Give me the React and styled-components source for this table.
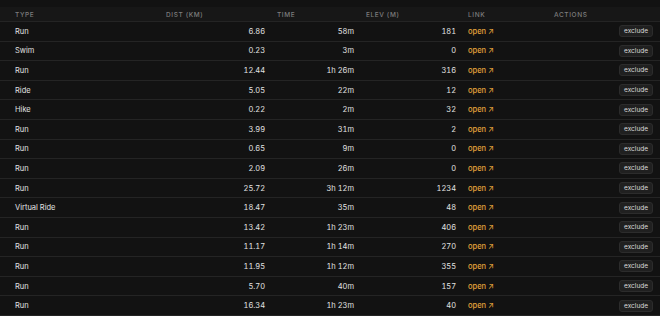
import React from "react";
import styled, { createGlobalStyle } from "styled-components";

const Global = createGlobalStyle`
  html, body { margin: 0; padding: 0; background: #121212; }
  body { font-family: Inter, "Noto Sans", sans-serif; -webkit-font-smoothing: antialiased; }
`;

const Wrap = styled.div`
  width: 660px;
  height: 316px;
  overflow: hidden;
  background: #121212;
  padding-top: 7px;
  box-sizing: border-box;
`;

const COLS = "160px 111px 89px 102px 86px 1fr";

const HeadRow = styled.div`
  display: grid;
  grid-template-columns: ${COLS};
  height: 15px;
  padding-top: 1px;
  box-sizing: border-box;
  border-bottom: 1px solid #242424;
  background: #171717;
  align-items: center;
`;

const Th = styled.div`
  padding: 0 6px;
  font-size: 6.5px;
  letter-spacing: 0.6px;
  text-transform: uppercase;
  color: #7d7d7d;
  font-weight: 500;
  &:first-child { padding-left: 15px; }
`;

const Row = styled.div`
  display: grid;
  grid-template-columns: ${COLS};
  height: 19.6px;
  box-sizing: border-box;
  border-bottom: 1px solid #242424;
  align-items: center;
`;

const Td = styled.div`
  padding: 0 6px;
  font-size: 7.5px;
  color: ${(p) => (p.$link ? "#e3a23b" : "#e2e2e2")};
  text-align: ${(p) => (p.$num || p.$end ? "right" : "left")};
  font-variant-numeric: tabular-nums;
  font-weight: ${(p) => (p.$link ? 500 : 400)};
  &:first-child { padding-left: 15px; }
  &:last-child { padding-right: 7px; }
`;

const Btn = styled.button`
  font-family: inherit;
  font-size: 6.5px;
  color: #dcdcdc;
  background: #202020;
  border: 1px solid #2c2c2c;
  border-radius: 3px;
  height: 12px;
  padding: 0 4px;
  line-height: 10px;
  cursor: pointer;
`;

const rows = [
  ["Run", "6.86", "58m", "181"],
  ["Swim", "0.23", "3m", "0"],
  ["Run", "12.44", "1h 26m", "316"],
  ["Ride", "5.05", "22m", "12"],
  ["Hike", "0.22", "2m", "32"],
  ["Run", "3.99", "31m", "2"],
  ["Run", "0.65", "9m", "0"],
  ["Run", "2.09", "26m", "0"],
  ["Run", "25.72", "3h 12m", "1234"],
  ["Virtual Ride", "18.47", "35m", "48"],
  ["Run", "13.42", "1h 23m", "406"],
  ["Run", "11.17", "1h 14m", "270"],
  ["Run", "11.95", "1h 12m", "355"],
  ["Run", "5.70", "40m", "157"],
  ["Run", "16.34", "1h 23m", "40"],
];

export default function App() {
  return (
    <>
      <Global />
      <Wrap>
        <HeadRow>
          <Th>Type</Th>
          <Th>Dist (km)</Th>
          <Th>Time</Th>
          <Th>Elev (m)</Th>
          <Th>Link</Th>
          <Th>Actions</Th>
        </HeadRow>
        {rows.map((r, i) => (
          <Row key={i}>
            <Td>{r[0]}</Td>
            <Td $num>{r[1]}</Td>
            <Td $num>{r[2]}</Td>
            <Td $num>{r[3]}</Td>
            <Td $link>open ↗</Td>
            <Td $end>
              <Btn>exclude</Btn>
            </Td>
          </Row>
        ))}
      </Wrap>
    </>
  );
}
